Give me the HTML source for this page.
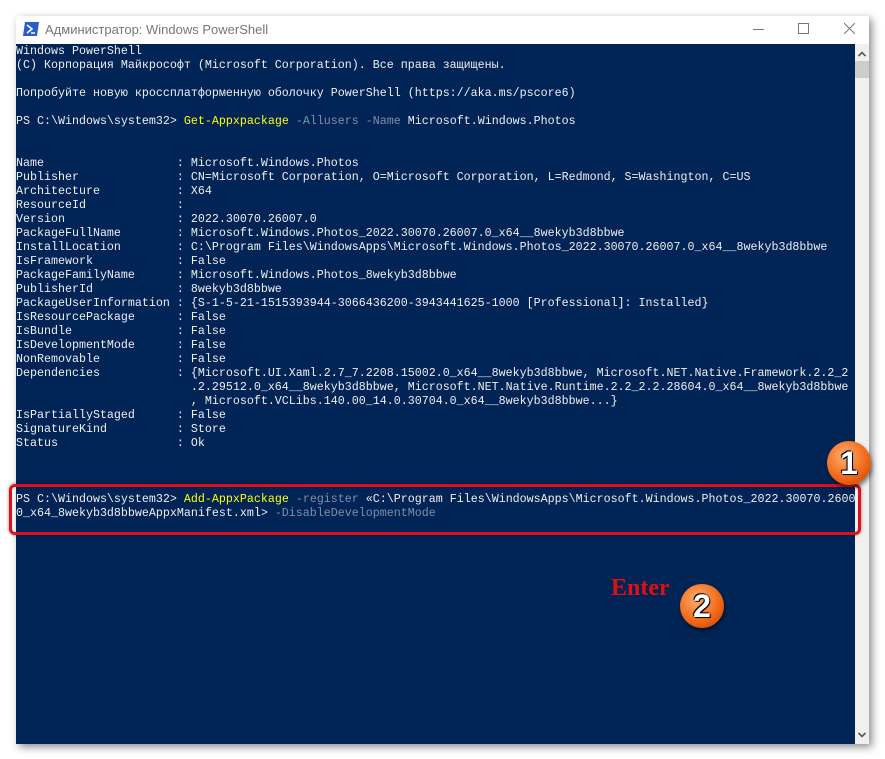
<!DOCTYPE html>
<html><head><meta charset="utf-8"><style>
body{margin:0;width:885px;height:759px;background:#fff;position:relative;overflow:hidden;font-family:"Liberation Sans",sans-serif}
.win{position:absolute;left:16px;top:16px;width:853px;height:728px;box-shadow:3px 3px 8px rgba(0,0,0,.45);background:#fff}
.title{position:absolute;left:0;top:0;width:853px;height:28px;background:#fff;color:#777;font-size:13px}
.term{position:absolute;left:0;top:28px;width:839px;height:700px;background:#012456}
.sb{position:absolute;left:839px;top:28px;width:14px;height:700px;background:#f0f0f0}
pre{margin:0;position:absolute;left:0;top:0px;font-family:"Liberation Mono",monospace;font-size:11.66px;line-height:14px;color:#eee;white-space:pre}
.y{color:#ffff00}.g{color:#7f8fa8}
.circ{position:absolute;width:44px;height:44px;border-radius:50%;background:radial-gradient(circle at 40% 35%,#ffb070,#f26a1a 55%,#c23a00);box-shadow:1px 3px 4px rgba(0,0,0,.5);color:#fff;font:bold 32px "Liberation Sans",sans-serif;text-align:center;line-height:44px;text-shadow:0 0 2px #000,1px 1px 0 #000,-1px -1px 0 #000}
</style></head><body>
<div class="win">
<div class="title">
<svg style="position:absolute;left:7px;top:6px" width="16" height="14"><polygon points="2,0 16,0 14,14 0,14" fill="#2b5ccc"/><path d="M4,3 L9,7 L4,11" stroke="#fff" stroke-width="1.6" fill="none"/><path d="M8,11 H12" stroke="#fff" stroke-width="1.5"/></svg>
<span style="position:absolute;left:29px;top:6px">Администратор: Windows PowerShell</span>
<div style="position:absolute;left:737px;top:13px;width:11px;height:1px;background:#777"></div>
<div style="position:absolute;left:782px;top:7px;width:9px;height:9px;border:1px solid #777"></div>
<svg style="position:absolute;left:828px;top:7px" width="11" height="11"><path d="M0,0L11,11M11,0L0,11" stroke="#777" stroke-width="1"/></svg>
</div>
<div class="term"><pre>Windows PowerShell
(C) Корпорация Майкрософт (Microsoft Corporation). Все права защищены.

Попробуйте новую кроссплатформенную оболочку PowerShell (https://aka.ms/pscore6)

PS C:\Windows\system32> <span class="y">Get-Appxpackage</span> <span class="g">-Allusers -Name</span> Microsoft.Windows.Photos


Name                   : Microsoft.Windows.Photos
Publisher              : CN=Microsoft Corporation, O=Microsoft Corporation, L=Redmond, S=Washington, C=US
Architecture           : X64
ResourceId             :
Version                : 2022.30070.26007.0
PackageFullName        : Microsoft.Windows.Photos_2022.30070.26007.0_x64__8wekyb3d8bbwe
InstallLocation        : C:\Program Files\WindowsApps\Microsoft.Windows.Photos_2022.30070.26007.0_x64__8wekyb3d8bbwe
IsFramework            : False
PackageFamilyName      : Microsoft.Windows.Photos_8wekyb3d8bbwe
PublisherId            : 8wekyb3d8bbwe
PackageUserInformation : {S-1-5-21-1515393944-3066436200-3943441625-1000 [Professional]: Installed}
IsResourcePackage      : False
IsBundle               : False
IsDevelopmentMode      : False
NonRemovable           : False
Dependencies           : {Microsoft.UI.Xaml.2.7_7.2208.15002.0_x64__8wekyb3d8bbwe, Microsoft.NET.Native.Framework.2.2_2
                         .2.29512.0_x64__8wekyb3d8bbwe, Microsoft.NET.Native.Runtime.2.2_2.2.28604.0_x64__8wekyb3d8bbwe
                         , Microsoft.VCLibs.140.00_14.0.30704.0_x64__8wekyb3d8bbwe...}
IsPartiallyStaged      : False
SignatureKind          : Store
Status                 : Ok



PS C:\Windows\system32> <span class="y">Add-AppxPackage</span> <span class="g">-register</span> «C:\Program Files\WindowsApps\Microsoft.Windows.Photos_2022.30070.2600
0_x64_8wekyb3d8bbweAppxManifest.xml&gt; <span class="g">-DisableDevelopmentMode</span></pre></div>
<div class="sb">
<svg style="position:absolute;left:3px;top:7px" width="8" height="6"><path d="M0.5,5L4,1.5L7.5,5" stroke="#555" stroke-width="1.6" fill="none"/></svg>
<div style="position:absolute;left:0;top:17px;width:14px;height:17px;background:#cdcdcd"></div>
<svg style="position:absolute;left:3px;top:688px" width="8" height="6"><path d="M0.5,1L4,4.5L7.5,1" stroke="#555" stroke-width="1.6" fill="none"/></svg>
</div>
</div>
<div style="position:absolute;left:9px;top:484px;width:846px;height:45px;border:3px solid #e0101a;border-radius:6px;box-shadow:0 0 3px rgba(0,0,0,.5)"></div>
<div class="circ" style="left:827px;top:441px">1</div>
<div style="position:absolute;left:611px;top:575px;color:#e01010;font:bold 24px 'Liberation Serif',serif">Enter</div>
<div class="circ" style="left:680px;top:584px">2</div>
</body></html>
